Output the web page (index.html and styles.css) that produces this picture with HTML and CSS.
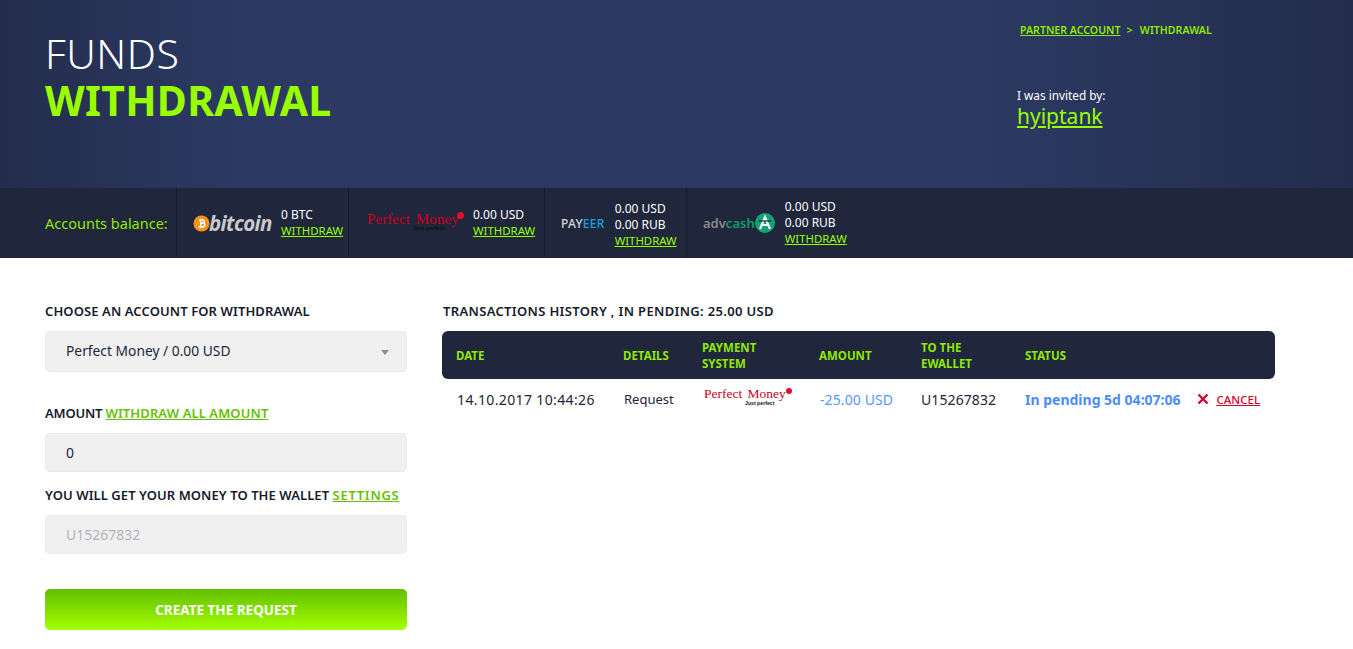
FILE: index.html
```html
<!DOCTYPE html>
<html lang="en">
<head>
<meta charset="utf-8">
<title>Funds withdrawal</title>
<link rel="stylesheet" href="styles.css">
</head>
<body>
<header class="hero">
  <h1 class="hero-title"><span class="hero-light">FUNDS</span><strong class="hero-bold">WITHDRAWAL</strong></h1>
  <div class="hero-side">
    <nav class="crumbs"><a href="#">PARTNER ACCOUNT</a><span class="crumb-sep">&gt;</span><span>WITHDRAWAL</span></nav>
    <p class="invited">I was invited by:</p>
    <a class="inviter" href="#">hyiptank</a>
  </div>
</header>
<section class="balance">
  <div class="balance-label">Accounts balance:</div>
  <div class="wallet wallet-btc">
    <div class="logo-btc">
      <svg class="btc-coin" viewBox="0 0 18 18" width="17" height="17"><circle cx="9" cy="9" r="8.500" fill="#f7931a"/><path d="M8.300 4.200v9.600M10.200 4.200v1.400M10.200 12.400v1.400M6.200 5.600h4.200c2.200 0 2.200 3.200 0 3.200H7.600M7.600 8.800h3.200c2.400 0 2.400 3.600 0 3.600H6" fill="none" stroke="#fff" stroke-width="1.500"/></svg>
      <span class="btc-word">bitcoin</span>
    </div>
    <div class="wallet-info"><span>0 BTC</span><a href="#">WITHDRAW</a></div>
  </div>
  <div class="wallet wallet-pm">
    <div class="logo-pm logo-pm-bar"><span class="pm-word">Perfect Money</span><i class="pm-dot"></i><span class="pm-sub">Just perfect</span></div>
    <div class="wallet-info"><span>0.00 USD</span><a href="#">WITHDRAW</a></div>
  </div>
  <div class="wallet wallet-payeer">
    <div class="logo-payeer">PAY<span>EER</span></div>
    <div class="wallet-info"><span>0.00 USD</span><span>0.00 RUB</span><a href="#">WITHDRAW</a></div>
  </div>
  <div class="wallet wallet-adv">
    <div class="logo-adv"><span class="adv-a">adv</span><span class="adv-b">cash</span>
      <svg class="adv-badge" viewBox="0 0 20 20" width="20" height="20"><circle cx="10" cy="10" r="10" fill="#0fa573"/><path d="M5 16 10 4l5 12M7.500 12h5" fill="none" stroke="#fff" stroke-width="2.200"/><path d="M3.500 8h13" stroke="#20263b" stroke-width="1.200"/></svg>
    </div>
    <div class="wallet-info"><span>0.00 USD</span><span>0.00 RUB</span><a href="#">WITHDRAW</a></div>
  </div>
</section>
<main class="content">
  <form class="request">
    <div class="field-label first">CHOOSE AN ACCOUNT FOR WITHDRAWAL</div>
    <div class="select"><span>Perfect Money / 0.00 USD</span><i class="caret"></i></div>
    <div class="field-label amount-label">AMOUNT <a class="all-link" href="#">WITHDRAW ALL AMOUNT</a></div>
    <div class="input">0</div>
    <div class="field-label wallet-label">YOU WILL GET YOUR MONEY TO THE WALLET <a class="settings-link" href="#">SETTINGS</a></div>
    <div class="input input-muted">U15267832</div>
    <button class="submit" type="button">CREATE THE REQUEST</button>
  </form>
  <section class="history">
    <div class="field-label first history-label">TRANSACTIONS HISTORY , IN PENDING: 25.00 USD</div>
    <table class="tx">
      <thead>
        <tr>
          <th class="c-date">DATE</th>
          <th class="c-details">DETAILS</th>
          <th class="c-system">PAYMENT<br>SYSTEM</th>
          <th class="c-amount">AMOUNT</th>
          <th class="c-wallet">TO THE<br>EWALLET</th>
          <th class="c-status">STATUS</th>
        </tr>
      </thead>
      <tbody>
        <tr>
          <td class="c-date tx-num">14.10.2017 10:44:26</td>
          <td class="c-details">Request</td>
          <td class="c-system"><div class="logo-pm logo-pm-table"><span class="pm-word">Perfect Money</span><i class="pm-dot"></i><span class="pm-sub">Just perfect</span></div></td>
          <td class="c-amount tx-num tx-amount">-25.00 USD</td>
          <td class="c-wallet tx-num">U15267832</td>
          <td class="c-status"><div class="status-cell"><strong>In pending 5d 04:07:06</strong>
            <a class="cancel" href="#"><svg viewBox="0 0 12 12" width="12" height="12"><path d="M1.500 1.500l9 9M10.500 1.500l-9 9" stroke="#d8002c" stroke-width="2.400" fill="none"/></svg><span>CANCEL</span></a></div></td>
        </tr>
      </tbody>
    </table>
  </section>
</main>
</body>
</html>
```
FILE: styles.css
```css
* { box-sizing: border-box; }
html, body { margin: 0; padding: 0; background: #fff; }
body { font-family: "Noto Sans", "Open Sans", sans-serif; color: #20263b; overflow-x: hidden; }
a { color: inherit; }

.hero {
  height: 188px;
  display: flex;
  justify-content: space-between;
  padding: 0 0 0 45px;
  background: linear-gradient(90deg, #232c4c 0, #2c3a63 18%, #2c3a63 72%, #232c4c 100%);
}
.hero-title { margin: 30px 0 0; font-weight: 400; line-height: 47px; }
.hero-light { display: block; color: #fff; font-size: 41px; font-weight: 300; letter-spacing: .5px; }
.hero-bold { display: block; color: #9f0; font-size: 41px; font-weight: 700; letter-spacing: .3px; }
.hero-side { width: 336px; padding-top: 23px; }
.crumbs { margin-left: 3px; display: flex; color: #8fe800; font-size: 10.600px; font-weight: 600; line-height: 14px; }
.crumb-sep { margin: 0 7px 0 6px; font-size: 11px; }
.invited { margin: 50px 0 0; color: #fff; font-size: 11.800px; line-height: 16px; }
.inviter { display: inline-block; color: #9f0; font-size: 21px; line-height: 27px; }

.balance { height: 70px; display: flex; background: #20263b; color: #fff; }
.balance-label { width: 177px; padding-left: 45px; border-right: 1px solid #171b2e; color: #8fe800; font-size: 14.500px; line-height: 70px; }
.wallet { display: flex; align-items: center; border-right: 1px solid #171b2e; }
.wallet-btc { width: 172px; padding-left: 16px; }
.wallet-pm { width: 196px; padding-left: 18px; }
.wallet-payeer { width: 142px; padding-left: 16px; }
.wallet-adv { padding-left: 16px; border-right: 0; }
.wallet-info { display: flex; flex-direction: column; font-size: 12px; line-height: 16px; }
.wallet-info a { color: #9f0; font-size: 11.400px; }
.wallet-btc .wallet-info { margin-left: 10px; }
.wallet-pm .wallet-info { margin-left: 9px; }
.wallet-payeer .wallet-info { margin-left: 10px; margin-top: 4px; }
.wallet-adv .wallet-info { margin-left: 10px; }

.logo-btc { display: flex; align-items: center; width: 78px; }
.btc-coin { flex: none; }
.btc-word { margin-left: -1px; color: #c9c9cc; font-family: "Open Sans", sans-serif; font-size: 20.500px; font-style: italic; font-weight: 700; letter-spacing: -.6px; line-height: 24px; }

.logo-pm { position: relative; color: #c8001e; font-family: "Liberation Serif", serif; white-space: nowrap; word-spacing: 2px; }
.pm-word { display: block; }
.pm-dot { position: absolute; border-radius: 50%; background: #e0102c; }
.pm-sub { position: absolute; color: #111; font-family: "Liberation Sans", sans-serif; font-weight: 700; word-spacing: 0; }
.logo-pm-bar { width: 97px; height: 24px; font-size: 15.200px; line-height: 16px; }
.logo-pm-bar .pm-dot { right: 0; top: 1px; width: 7px; height: 7px; }
.logo-pm-bar .pm-sub { left: 46px; top: 14px; font-size: 5.600px; line-height: 7px; }
.logo-pm-table { width: 88px; height: 22px; margin-left: 2px; font-size: 13.500px; line-height: 12px; }
.logo-pm-table .pm-dot { right: 0; top: 0; width: 6px; height: 6px; }
.logo-pm-table .pm-sub { left: 41px; top: 12px; font-size: 5.200px; line-height: 7px; }

.logo-payeer { color: #d8d8dc; font-size: 12px; font-weight: 500; letter-spacing: .3px; }
.logo-payeer span { color: #10a5dc; }
.logo-adv { display: flex; align-items: center; font-size: 13px; font-weight: 600; }
.adv-a { color: #8a8a8e; }
.adv-b { color: #0f9c6c; }
.adv-badge { flex: none; }

.content { display: flex; padding: 0 0 0 45px; gap: 35px; }
.request { width: 362px; flex: none; }
.history { width: 833px; flex: none; }
.field-label { color: #151a2c; font-size: 13px; font-weight: 600; line-height: 18px; letter-spacing: .1px; white-space: nowrap; }
.field-label a { color: #66c000; }
.field-label.first { margin-top: 44px; }
.all-link { letter-spacing: .1px; }
.settings-link { letter-spacing: .7px; }
.history-label { margin-left: 1px; letter-spacing: .34px; }
.amount-label { margin-top: 32px; letter-spacing: -.2px; }
.wallet-label { margin-top: 14px; letter-spacing: .07px; }

.select, .input { display: flex; align-items: center; background: #f0f0f0; border-radius: 5px; padding: 0 21px; font-size: 14px; color: #20263b; box-shadow: inset 0 0 0 1px #ececec; }
.select { height: 41px; justify-content: space-between; margin-top: 11px; padding-bottom: 2px; font-size: 13.800px; }
.caret { width: 0; height: 0; margin-right: -3px; margin-top: 3px; border: 4px solid transparent; border-top: 5px solid #8d8d8d; border-bottom: 0; }
.input { height: 39px; margin-top: 11px; }
.input-muted { color: #b4b4bc; }
.submit { display: block; width: 100%; height: 41px; margin-top: 35px; border: 0; border-radius: 5px; background: linear-gradient(180deg, #62bf00, #a3ff00); color: #fff; font-family: inherit; font-size: 13.500px; font-weight: 700; }

.tx { width: 833px; margin-top: 11px; border-collapse: separate; border-spacing: 0; table-layout: fixed; }
.tx th { height: 48px; padding: 1px 0 0; background: #20263b; color: #8fe800; font-size: 11.500px; font-weight: 700; line-height: 16px; text-align: left; }
.tx th:first-child { border-radius: 6px 0 0 6px; }
.tx th:last-child { border-radius: 0 6px 6px 0; }
.tx td { height: 40px; padding: 0; font-size: 13px; vertical-align: middle; white-space: nowrap; }
.tx td.tx-num { font-size: 14px; letter-spacing: .1px; }
.tx th.c-date { width: 181px; padding-left: 14px; }
.tx td.c-date { padding-left: 15px; letter-spacing: .37px; }
.tx td.c-details { padding-left: 1px; }
.c-details { width: 79px; }
.c-system { width: 117px; }
.c-amount { width: 102px; }
.tx td.tx-amount { padding-left: 1px; }
.c-wallet { width: 104px; }
.tx-amount { color: #5a96ff; }
.status-cell { display: flex; align-items: center; color: #4d8dff; font-size: 14px; }
.status-cell strong { font-weight: 700; }
.cancel { display: flex; align-items: center; margin-left: 16px; color: #d8002c; font-size: 11.500px; font-weight: 500; }
.cancel span { margin-left: 8px; text-decoration: underline; }
```
